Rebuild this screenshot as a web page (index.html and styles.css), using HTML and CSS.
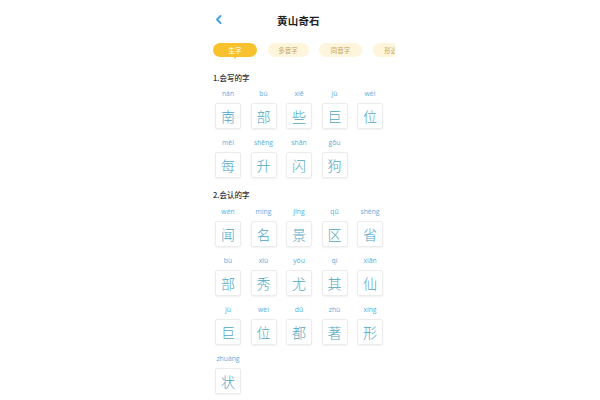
FILE: index.html
```html
<!DOCTYPE html>
<html lang="zh">
<head>
<meta charset="utf-8">
<title>黄山奇石</title>
<link rel="stylesheet" href="styles.css">
</head>
<body>
<div class="phone">
  <header class="topbar">
    <span class="back"><svg width="7" height="9" viewBox="0 0 7 9"><path d="M5.5 1 L2 4.5 L5.5 8" fill="none" stroke="#3ea4e0" stroke-width="1.8" stroke-linecap="round" stroke-linejoin="round"/></svg></span>
    <h1 class="title">黄山奇石</h1>
  </header>
  <nav class="tabs">
    <span class="tab active">生字</span>
    <span class="tab t2">多音字</span>
    <span class="tab t3">同音字</span>
    <span class="tab t4">形近字</span>
  </nav>

  <h2 class="sec">1.会写的字</h2>
  <div class="grid">
    <div class="cell"><span class="py">nán</span><span class="box">南</span></div>
    <div class="cell"><span class="py">bù</span><span class="box">部</span></div>
    <div class="cell"><span class="py">xiē</span><span class="box">些</span></div>
    <div class="cell"><span class="py">jù</span><span class="box">巨</span></div>
    <div class="cell"><span class="py">wèi</span><span class="box">位</span></div>
    <div class="cell"><span class="py">měi</span><span class="box">每</span></div>
    <div class="cell"><span class="py">shēng</span><span class="box">升</span></div>
    <div class="cell"><span class="py">shǎn</span><span class="box">闪</span></div>
    <div class="cell"><span class="py">gǒu</span><span class="box">狗</span></div>
  </div>

  <h2 class="sec sec2">2.会认的字</h2>
  <div class="grid">
    <div class="cell"><span class="py">wén</span><span class="box">闻</span></div>
    <div class="cell"><span class="py">míng</span><span class="box">名</span></div>
    <div class="cell"><span class="py">jǐng</span><span class="box">景</span></div>
    <div class="cell"><span class="py">qū</span><span class="box">区</span></div>
    <div class="cell"><span class="py">shěng</span><span class="box">省</span></div>
    <div class="cell"><span class="py">bù</span><span class="box">部</span></div>
    <div class="cell"><span class="py">xiù</span><span class="box">秀</span></div>
    <div class="cell"><span class="py">yóu</span><span class="box">尤</span></div>
    <div class="cell"><span class="py">qí</span><span class="box">其</span></div>
    <div class="cell"><span class="py">xiān</span><span class="box">仙</span></div>
    <div class="cell"><span class="py">jù</span><span class="box">巨</span></div>
    <div class="cell"><span class="py">wèi</span><span class="box">位</span></div>
    <div class="cell"><span class="py">dū</span><span class="box">都</span></div>
    <div class="cell"><span class="py">zhù</span><span class="box">著</span></div>
    <div class="cell"><span class="py">xíng</span><span class="box">形</span></div>
    <div class="cell"><span class="py">zhuàng</span><span class="box">状</span></div>
  </div>
</div>
</body>
</html>
```

FILE: styles.css
```css
* { box-sizing: border-box; }
html, body { margin: 0; padding: 0; background: #fff; }
body {
  width: 600px;
  height: 400px;
  overflow: hidden;
  font-family: "Noto Sans CJK SC", "Noto Sans", sans-serif;
  color: #333;
}
.phone {
  width: 200px;
  margin: 0 auto;
  padding-left: 13px;
}
.topbar {
  height: 40px;
  display: flex;
  align-items: center;
}
.back {
  display: flex;
  margin-left: 2px;
  margin-top: -2px;
}
.title {
  margin: 0 0 0 55px;
  font-size: 10.5px;
  font-weight: 700;
  color: #222;
  letter-spacing: 0.2px;
}
.tabs {
  margin-top: 3px;
  display: flex;
  gap: 10.5px;
  width: 182px;
  overflow: hidden;
  height: 17px;
}
.tab {
  flex: none;
  height: 14px;
  line-height: 14px;
  border-radius: 7px;
  font-size: 6.5px;
  text-align: center;
  background: #fdf5dc;
  color: #c8a465;
  position: relative;
}
.tab.active {
  width: 44px;
  background: #f8c22e;
  color: #fff;
}
.t2 { width: 41px; }
.t3 { width: 43px; }
.t4 { width: 43px; }
.tab.active::after {
  content: "";
  position: absolute;
  left: 50%;
  top: 13px;
  margin-left: -2.5px;
  border-left: 2.5px solid transparent;
  border-right: 2.5px solid transparent;
  border-top: 3px solid #f8c22e;
}
.sec {
  margin: 13px 0 0;
  height: 10px;
  line-height: 10px;
  font-size: 7.5px;
  font-weight: 500;
  color: #333;
}
.sec2 { margin-top: 12px; }
.grid {
  margin-top: 5px;
  display: grid;
  grid-template-columns: repeat(5, 26px);
  column-gap: 9.5px;
  row-gap: 8px;
  margin-left: 2px;
}
.sec2 + .grid { margin-top: 6px; }
.cell {
  display: flex;
  flex-direction: column;
  align-items: center;
}
.py {
  height: 11px;
  line-height: 11px;
  font-family: "Open Sans", "Noto Sans", sans-serif;
  font-size: 6.8px;
  color: #58ade0;
  white-space: nowrap;
}
.box {
  margin-top: 4px;
  width: 26px;
  height: 26px;
  border: 1px solid #ececec;
  border-radius: 2px;
  box-shadow: 0 1px 2px rgba(0,0,0,0.06);
  display: flex;
  align-items: center;
  justify-content: center;
  font-family: "Noto Sans CJK SC", sans-serif;
  font-weight: 300;
  font-size: 14px;
  color: #4fa6c4;
}
```
